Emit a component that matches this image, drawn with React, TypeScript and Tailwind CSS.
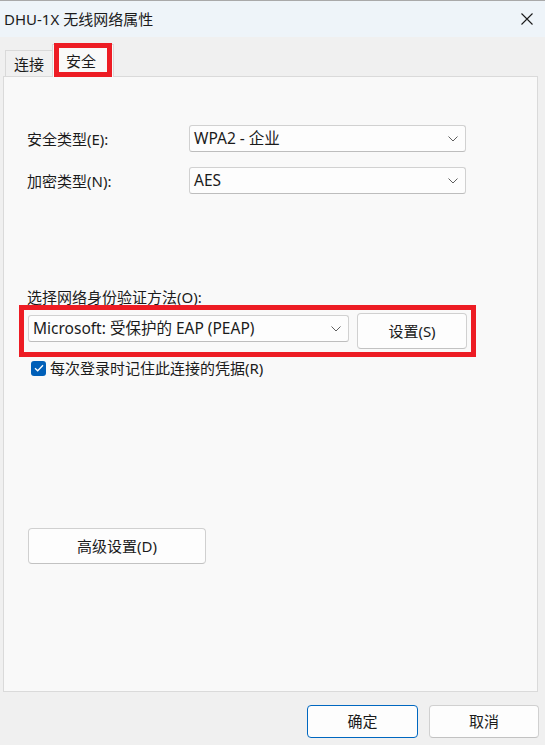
import React from "react";

const Chevron = () => (
  <svg width="10" height="6" viewBox="0 0 10 6" className="shrink-0">
    <path d="M0.5 0.5 L5 5 L9.5 0.5" fill="none" stroke="#5f5f5f" strokeWidth="1" />
  </svg>
);

const Select = ({ text, className }: { text: string; className: string }) => (
  <div
    className={`flex items-center justify-between bg-[#fdfdfd] border border-[#d1d1d1] border-b-[#bdbdbd] rounded-[3px] pl-[4px] pr-[7px] ${className}`}
  >
    <span className="text-[15.5px] text-[#1b1b1b] leading-none">{text}</span>
    <Chevron />
  </div>
);

const Button = ({ text, className }: { text: string; className: string }) => (
  <div
    className={`flex items-center justify-center bg-[#fdfdfd] border border-[#d0d0d0] border-b-[#c2c2c2] rounded-[4px] text-[15px] text-[#1b1b1b] ${className}`}
  >
    {text}
  </div>
);

export default function App() {
  return (
    <div className="w-[545px] h-[745px] bg-[#f0f0f0] flex flex-col font-['Noto_Sans','Noto_Sans_CJK_SC',sans-serif] text-[#1b1b1b] overflow-hidden">
      {/* Title bar */}
      <div className="h-[37px] bg-[#eef4f9] border-t border-[#a9a9a9] flex items-center justify-between pl-[4px] pr-[12px] shrink-0">
        <span className="text-[15px] leading-none">DHU-1X 无线网络属性</span>
        <svg width="12" height="12" viewBox="0 0 12 12">
          <path d="M0.5 0.5 L11.5 11.5 M11.5 0.5 L0.5 11.5" stroke="#1b1b1b" strokeWidth="1.1" />
        </svg>
      </div>

      {/* Tabs */}
      <div className="h-[39px] flex items-end pl-[5px] shrink-0 relative z-10">
        <div className="h-[26px] w-[48px] border border-b-0 border-[#d9d9d9] bg-[#f0f0f0] flex items-center justify-center text-[15px] pt-[1px]">
          连接
        </div>
        <div className="relative h-[33px] w-[62px] -ml-[1px] border border-b-0 border-[#d9d9d9] bg-[#f9f9f9] flex items-start justify-center pt-[6px] text-[15px] mb-[-1px]">
          <span className="leading-[20px] mr-[4px]">安全</span>
          <div className="absolute left-[1px] top-[-2px] w-[58px] h-[34px] border-[5px] border-[#ed1c24]" />
        </div>
      </div>

      {/* Panel */}
      <div className="ml-[3px] mr-[7px] h-[616px] bg-[#f9f9f9] border border-[#dadada] flex flex-col pl-[23px] shrink-0">
        <div className="mt-[48px] flex items-center">
          <span className="w-[162px] text-[15px] leading-[20px]">安全类型(E):</span>
          <Select text="WPA2 - 企业" className="w-[277px] h-[27px]" />
        </div>
        <div className="mt-[15px] flex items-center">
          <span className="w-[162px] text-[15px] leading-[20px]">加密类型(N):</span>
          <Select text="AES" className="w-[277px] h-[27px]" />
        </div>

        <div className="mt-[93px] text-[15px] leading-[20px]">选择网络身份验证方法(O):</div>

        <div className="relative mt-[6px] ml-[1px] w-[439px] h-[36px] flex items-start justify-between">
          <Select text="Microsoft: 受保护的 EAP (PEAP)" className="w-[321px] h-[27px] mt-[2px]" />
          <Button text="设置(S)" className="w-[110px] h-[36px]" />
          <div className="absolute left-[-9px] top-[-8px] right-[-9px] bottom-[-8px] border-[5px] border-[#ed1c24]" />
        </div>

        <div className="mt-[9px] ml-[4px] flex items-center">
          <div className="w-[15px] h-[15px] rounded-[3px] bg-[#005fb8] flex items-center justify-center">
            <svg width="10" height="8" viewBox="0 0 10 8">
              <path d="M1 4.2 L3.7 6.8 L9 1.3" fill="none" stroke="#ffffff" strokeWidth="1.3" />
            </svg>
          </div>
          <span className="ml-[4px] text-[15px] leading-[20px]">每次登录时记住此连接的凭据(R)</span>
        </div>

        <Button text="高级设置(D)" className="mt-[150px] ml-[1px] w-[178px] h-[36px]" />
      </div>

      {/* Bottom buttons */}
      <div className="mt-[13px] flex justify-end gap-[11px] pr-[6px]">
        <Button text="确定" className="w-[111px] h-[33px] !border-[#0067c0]" />
        <Button text="取消" className="w-[110px] h-[33px]" />
      </div>
    </div>
  );
}
